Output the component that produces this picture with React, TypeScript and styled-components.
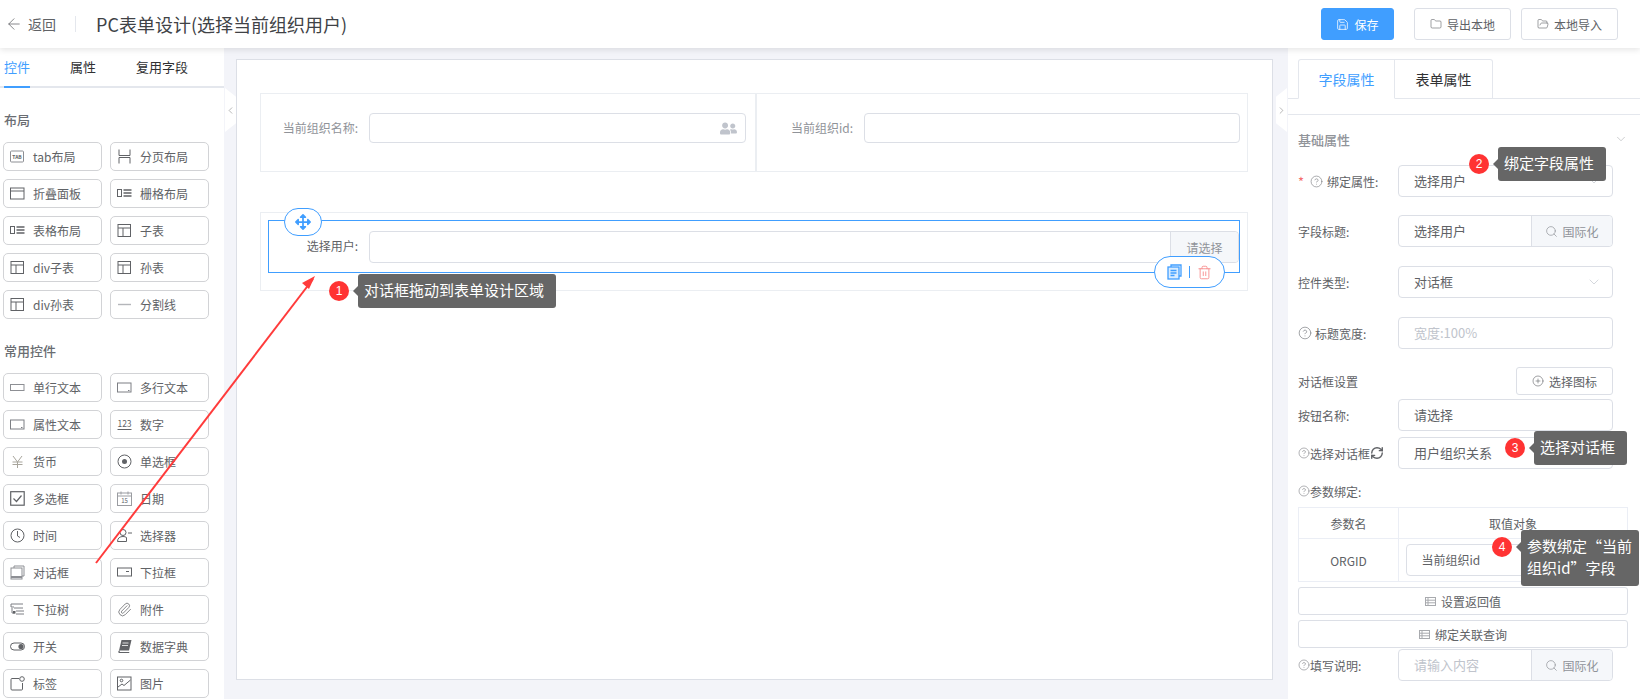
import React from 'react';
import styled, { createGlobalStyle } from 'styled-components';
import {
  ArrowLeft,
  ChevronDown,
  ChevronLeft,
  ChevronRight,
  CircleHelp,
  CirclePlus,
  Folder,
  FolderOpen,
  Paperclip,
  RefreshCw,
  Save,
  Search,
  Trash2,
} from 'lucide-react';
import { FaArrowsAlt, FaUserFriends } from 'react-icons/fa';

const GlobalStyle = createGlobalStyle`
  html, body {
    margin: 0;
    padding: 0;
    background: #fff;
    font-family: "Noto Sans CJK SC", "Noto Sans", sans-serif;
  }
  * {
    box-sizing: border-box;
  }
`;

const Page = styled.div`
  position: relative;
  width: 1640px;
  height: 699px;
  overflow: hidden;
  display: flex;
  flex-direction: column;
  background: #f3f4f9;
`;

const Header = styled.header`
  height: 48px;
  flex: none;
  display: flex;
  align-items: center;
  padding: 0 22px 0 5px;
  background: #fff;
  box-shadow: 0 2px 6px rgba(0, 0, 0, 0.1);
  position: relative;
  z-index: 2;
`;

const BackLink = styled.div`
  display: flex;
  align-items: center;
  gap: 5px;
  color: #606266;
  font-size: 14px;
  width: 70px;
`;

const HeaderDivider = styled.div`
  width: 1px;
  height: 16px;
  background: #e4e7ed;
  margin-right: 20px;
`;

const Title = styled.div`
  flex: 1;
  font-size: 18px;
  color: #404246;
`;

const HeaderButton = styled.button<{ $primary?: boolean; $w: number; $ml: number }>`
  width: ${(p) => p.$w}px;
  height: 32px;
  margin-left: ${(p) => p.$ml}px;
  display: flex;
  align-items: center;
  justify-content: center;
  gap: 5px;
  padding: 0;
  border-radius: 3px;
  font-family: inherit;
  font-size: 12px;
  color: ${(p) => (p.$primary ? '#fff' : '#606266')};
  background: ${(p) => (p.$primary ? '#409eff' : '#fff')};
  border: 1px solid ${(p) => (p.$primary ? '#409eff' : '#dcdfe6')};
`;

const Body = styled.div`
  flex: 1;
  min-height: 0;
  display: flex;
`;

const LeftPanel = styled.aside`
  width: 224px;
  flex: none;
  background: #fff;
  overflow: hidden;
`;

const LeftTabs = styled.div`
  height: 40px;
  display: flex;
  gap: 40px;
  padding-left: 4px;
  border-bottom: 2px solid #e4e7ed;
`;

const LeftTab = styled.div<{ $active?: boolean }>`
  height: 40px;
  line-height: 38px;
  font-size: 13px;
  color: ${(p) => (p.$active ? '#409eff' : '#303133')};
  border-bottom: 2px solid ${(p) => (p.$active ? '#409eff' : 'transparent')};
`;

const Palette = styled.div`
  padding: 22px 0 0 3px;
`;

const PaletteTitle = styled.div<{ $mt?: number }>`
  height: 20px;
  line-height: 20px;
  margin: ${(p) => p.$mt ?? 0}px 0 12px 1px;
  font-size: 13px;
  font-weight: 500;
  color: #6a6d72;
`;

const PaletteGrid = styled.div`
  display: grid;
  grid-template-columns: 99px 99px;
  grid-auto-rows: 29px;
  column-gap: 8px;
  row-gap: 8px;
`;

const PaletteItem = styled.div`
  display: flex;
  align-items: center;
  gap: 8px;
  padding-left: 6px;
  border: 1px solid #d2d3d6;
  border-radius: 5px;
  background: #fff;
  font-size: 12px;
  color: #606266;
  white-space: nowrap;
`;

const IconBox = styled.span`
  width: 15px;
  height: 15px;
  flex: none;
  display: flex;
  align-items: center;
  justify-content: center;
  color: #606266;
`;

const Center = styled.main`
  flex: 1;
  min-width: 0;
  padding: 11px 15px 19px 12px;
`;

const Canvas = styled.div`
  height: 100%;
  padding: 33px 24px 0 23px;
  background: #fff;
  border: 1px solid #dcdfe6;
  display: flex;
  flex-direction: column;
  gap: 40px;
`;

const FormRow = styled.div`
  height: 79px;
  display: flex;
  border: 1px solid #ebeef2;
`;

const FormCell = styled.div<{ $w: number; $pad: number }>`
  flex: ${(p) => (p.$w ? `0 0 ${p.$w}px` : '1')};
  display: flex;
  align-items: flex-start;
  padding: 19px ${(p) => p.$pad}px 0 0;
  & + & {
    border-left: 2px solid #ebeef2;
  }
`;

const CellLabel = styled.div<{ $w: number; $light?: boolean }>`
  width: ${(p) => p.$w}px;
  height: 30px;
  line-height: 29px;
  text-align: right;
  padding-right: 11px;
  flex: none;
  font-size: 12px;
  color: ${(p) => (p.$light ? '#909399' : '#606266')};
`;

const CellInput = styled.div`
  flex: 1;
  height: 30px;
  display: flex;
  align-items: center;
  justify-content: flex-end;
  padding-right: 8px;
  border: 1px solid #dcdfe6;
  border-radius: 4px;
  color: #c0c4cc;
`;

const DropRow = styled.div`
  height: 79px;
  padding: 7px;
  border: 1px solid #ebeef2;
`;

const Selected = styled.div`
  position: relative;
  height: 53px;
  display: flex;
  padding: 10px 0 0 0;
  border: 1px solid #409eff;
`;

const SelectInput = styled.div`
  flex: 1;
  height: 32px;
  display: flex;
  justify-content: flex-end;
  border: 1px solid #dcdfe6;
  border-radius: 4px;
`;

const SelectAddon = styled.div`
  width: 68px;
  display: flex;
  align-items: center;
  justify-content: center;
  background: #f5f7fa;
  border-left: 1px solid #dcdfe6;
  border-radius: 0 4px 4px 0;
  font-size: 12px;
  color: #909399;
`;

const MoveHandle = styled.div`
  position: absolute;
  left: 15px;
  top: -13px;
  width: 38px;
  height: 28px;
  display: flex;
  align-items: center;
  justify-content: center;
  background: #fff;
  border: 1px solid #409eff;
  border-radius: 14px;
  color: #409eff;
`;

const ActionPill = styled.div`
  position: absolute;
  right: 14px;
  top: 35px;
  width: 71px;
  height: 32px;
  display: flex;
  align-items: center;
  justify-content: center;
  gap: 7px;
  background: #fff;
  border: 1px solid #409eff;
  border-radius: 16px;
`;

const PillDivider = styled.span`
  width: 1px;
  height: 12px;
  background: #409eff;
`;

const Handle = styled.div<{ $side: 'left' | 'right' }>`
  position: absolute;
  top: 88px;
  ${(p) => (p.$side === 'left' ? 'left: 225px;' : 'left: 1276px;')}
  width: 11px;
  height: 44px;
  display: flex;
  align-items: center;
  justify-content: center;
  background: #fff;
  color: #666;
  clip-path: ${(p) =>
    p.$side === 'left'
      ? 'polygon(0 0, 100% 20%, 100% 80%, 0 100%)'
      : 'polygon(0 20%, 100% 0, 100% 100%, 0 80%)'};
`;

const RightPanel = styled.aside`
  width: 352px;
  flex: none;
  background: #fff;
  overflow: hidden;
`;

const RightTabs = styled.div`
  margin-top: 11px;
  height: 40px;
  display: flex;
  padding-left: 10px;
  border-bottom: 1px solid #e4e7ed;
`;

const RightTab = styled.div<{ $active?: boolean }>`
  width: ${(p) => (p.$active ? 97 : 98)}px;
  height: 40px;
  line-height: 38px;
  text-align: center;
  font-size: 14px;
  color: ${(p) => (p.$active ? '#409eff' : '#303133')};
  background: #fff;
  border: 1px solid #e4e7ed;
  border-bottom-color: ${(p) => (p.$active ? '#fff' : '#e4e7ed')};
  border-left-width: ${(p) => (p.$active ? 1 : 0)}px;
  border-radius: ${(p) => (p.$active ? '3px 0 0 0' : '0 3px 0 0')};
`;

const PropBody = styled.div`
  margin-top: 15px;
  padding: 0 12px 0 10px;
  border-top: 1px solid #e4e7ed;
`;

const SectionHead = styled.div`
  height: 50px;
  padding-bottom: 2px;
  display: flex;
  align-items: center;
  justify-content: space-between;
  font-size: 13px;
  font-weight: 500;
  color: #909399;
`;

const PropRow = styled.div<{ $mb: number }>`
  display: flex;
  align-items: center;
  margin-bottom: ${(p) => p.$mb}px;
`;

const PropLabel = styled.div<{ $gap?: number }>`
  width: 100px;
  flex: none;
  display: flex;
  align-items: center;
  gap: ${(p) => p.$gap ?? 0}px;
  font-size: 12px;
  color: #606266;
  white-space: nowrap;
`;

const Star = styled.span`
  color: #f56c6c;
  margin-right: 2px;
  font-size: 13px;
`;

const Field = styled.div`
  width: 215px;
  height: 32px;
  display: flex;
  align-items: center;
  border: 1px solid #dcdfe6;
  border-radius: 4px;
  background: #fff;
  font-size: 13px;
  color: #606266;
`;

const FieldText = styled.div<{ $placeholder?: boolean }>`
  flex: 1;
  padding: 0 0 2px 15px;
  color: ${(p) => (p.$placeholder ? '#c0c4cc' : '#606266')};
`;

const FieldAddon = styled.div`
  width: 81px;
  height: 100%;
  display: flex;
  align-items: center;
  justify-content: center;
  gap: 4px;
  background: #f5f7fa;
  border-left: 1px solid #dcdfe6;
  border-radius: 0 4px 4px 0;
  font-size: 12px;
  color: #909399;
`;

const FieldChevron = styled.span`
  display: flex;
  margin-right: 10px;
  color: #c0c4cc;
`;

const SubHead = styled.div`
  display: flex;
  align-items: center;
  justify-content: space-between;
  margin-bottom: 4px;
  padding-right: 15px;
  font-size: 12px;
  color: #606266;
`;

const IconButton = styled.button`
  width: 97px;
  height: 28px;
  display: flex;
  align-items: center;
  justify-content: center;
  gap: 5px;
  padding: 0;
  background: #fff;
  border: 1px solid #dcdfe6;
  border-radius: 3px;
  font-family: inherit;
  font-size: 12px;
  color: #606266;
`;

const BindLabel = styled.div`
  height: 20px;
  margin: 12px 0 6px;
  display: flex;
  align-items: center;
  gap: 0;
  font-size: 12px;
  color: #606266;
`;

const BindTable = styled.div`
  display: grid;
  grid-template-columns: 100px 1fr;
  grid-template-rows: 31px 42px;
  border: 1px solid #ebeef5;
  margin-bottom: 5px;
  font-size: 12px;
  color: #606266;
`;

const BindCell = styled.div<{ $left?: boolean; $top?: boolean }>`
  display: flex;
  align-items: center;
  justify-content: center;
  border-right: ${(p) => (p.$left ? '1px solid #ebeef5' : 'none')};
  border-bottom: ${(p) => (p.$top ? '1px solid #ebeef5' : 'none')};
`;

const BindSelect = styled(Field)`
  width: 215px;
  font-size: 12px;
`;

const WideButton = styled.button<{ $mb: number }>`
  width: 100%;
  height: 28px;
  margin-bottom: ${(p) => p.$mb}px;
  display: flex;
  align-items: center;
  justify-content: center;
  gap: 5px;
  padding: 0;
  background: #fff;
  border: 1px solid #dcdfe6;
  border-radius: 3px;
  font-family: inherit;
  font-size: 12px;
  color: #606266;
`;

const Callout = styled.div<{ $x: number; $y: number }>`
  position: absolute;
  left: ${(p) => p.$x}px;
  top: ${(p) => p.$y}px;
  display: flex;
  align-items: flex-start;
  z-index: 5;
`;

const Badge = styled.div<{ $mt: number }>`
  width: 20px;
  height: 20px;
  margin-top: ${(p) => p.$mt}px;
  margin-right: 9px;
  display: flex;
  align-items: center;
  justify-content: center;
  border-radius: 50%;
  background: #ff3333;
  color: #fff;
  font-family: "Liberation Sans", sans-serif;
  font-size: 12px;
`;

const Tip = styled.div<{ $w: number }>`
  position: relative;
  width: ${(p) => p.$w}px;
  padding: 5px 6px 7px;
  background: #666;
  border-radius: 3px;
  color: #fff;
  font-size: 15px;
  line-height: 22px;

  &::before {
    content: '';
    position: absolute;
    left: -5px;
    top: 12px;
    border-style: solid;
    border-width: 5px 5px 5px 0;
    border-color: transparent #666 transparent transparent;
  }
`;

const ArrowLayer = styled.svg`
  position: absolute;
  inset: 0;
  z-index: 4;
  pointer-events: none;
`;

const Line = (props: React.SVGProps<SVGSVGElement>) => (
  <svg
    width="15"
    height="15"
    viewBox="0 0 15 15"
    fill="none"
    stroke="currentColor"
    strokeWidth="1"
    {...props}
  />
);

const TableIcon = () => (
  <Line>
    <rect x="1" y="1.5" width="12.5" height="12" />
    <path d="M1 5h12.5M6 5v8.5" />
  </Line>
);

const ListIcon = () => (
  <Line>
    <rect x="0.5" y="3.5" width="4" height="7" />
    <path d="M6.5 4h8M6.5 7h8M6.5 10h8" strokeWidth="1.4" />
  </Line>
);

const icons: Record<string, React.ReactNode> = {
  tab: (
    <Line stroke="#8d8f94">
      <rect x="0.5" y="2" width="13" height="11" rx="1" />
      <text x="7" y="9.500" fontSize="5" fontWeight="700" textAnchor="middle" fill="#606266" stroke="none">
        TAB
      </text>
    </Line>
  ),
  page: (
    <Line>
      <path d="M2 0.500v6h11v-6M2 14.500v-6h11v6" />
    </Line>
  ),
  fold: (
    <Line>
      <rect x="0.5" y="2" width="13.5" height="11" />
      <path d="M0.5 5h13.5" />
    </Line>
  ),
  list: <ListIcon />,
  table: <TableIcon />,
  divider: (
    <Line>
      <path d="M1 7.5h13" stroke="#b4b6ba" strokeWidth="1.4" />
    </Line>
  ),
  single: (
    <Line stroke="#8d8f94">
      <rect x="0.5" y="4.5" width="13.5" height="6" />
    </Line>
  ),
  multi: (
    <Line stroke="#7d7f84">
      <rect x="0.5" y="3" width="13.5" height="9" />
      <path d="M11 10.5h1.5" />
    </Line>
  ),
  number: (
    <Line>
      <text x="7.5" y="10" fontSize="8.5" textAnchor="middle" fill="currentColor" stroke="none">
        123
      </text>
      <path d="M0.5 12.5h14" />
    </Line>
  ),
  currency: (
    <Line stroke="#a8a59c">
      <path d="M3 2l4.5 6 4.500-6M2.500 8h10M2.500 10.500h10M7.500 8v6" />
    </Line>
  ),
  radio: (
    <Line>
      <circle cx="7.500" cy="7.500" r="6.500" />
      <circle cx="7.500" cy="7.500" r="2.500" fill="currentColor" stroke="none" />
    </Line>
  ),
  check: (
    <Line strokeWidth="1.200">
      <rect x="0.700" y="0.700" width="13.500" height="13.500" />
      <path d="M3.500 7.500l3 3 5-6" />
    </Line>
  ),
  date: (
    <Line stroke="#9a9ca1">
      <rect x="0.500" y="2" width="14" height="12.500" />
      <path d="M0.500 5h14M4 0.500v3M11 0.500v3" />
      <text x="7.500" y="12" fontSize="6" textAnchor="middle" fill="currentColor" stroke="none">
        15
      </text>
    </Line>
  ),
  time: (
    <Line>
      <circle cx="7.500" cy="7.500" r="6.500" />
      <path d="M7.500 3v5l2.500 1.500" />
    </Line>
  ),
  picker: (
    <Line>
      <circle cx="6" cy="4.500" r="3" />
      <path d="M0.500 13.500c0-3.500 2.500-5 5.500-5 1.500 0 2.500 0.300 3.500 1v4zM11 5h4" />
    </Line>
  ),
  dialog: (
    <Line stroke="#8d8f94">
      <path d="M4 3V1h10v10h-2" />
      <rect x="1" y="3" width="11" height="11" />
      <path d="M1 12h11" strokeWidth="2" />
    </Line>
  ),
  dropdown: (
    <Line>
      <rect x="0.500" y="3" width="14" height="8" />
      <path d="M9 6.500h3" />
    </Line>
  ),
  tree: (
    <Line stroke="#7d7f84">
      <path d="M1 2h12M1 2v3h3M4 6h9M2 6v5h3M6 9h8M6 12h8" />
      <rect x="3" y="9" width="2.500" height="2.500" fill="currentColor" stroke="none" />
    </Line>
  ),
  attach: <Paperclip size={15} strokeWidth={1.2} />,
  toggle: (
    <Line>
      <rect x="0.500" y="4" width="14" height="7" rx="3.500" />
      <circle cx="11" cy="7.500" r="2.600" fill="currentColor" stroke="none" />
    </Line>
  ),
  dict: (
    <Line stroke="none">
      <path d="M4.500 1h10l-2.500 10.500H2z" fill="currentColor" />
      <path d="M2 11.500c-1 1-1 2 0 2.500h10l0.500-1H3c-0.500 0-0.500-1 0-1.500z" fill="currentColor" />
      <path d="M5.500 4h6M5 6.500h6" stroke="#fff" strokeWidth="0.800" />
    </Line>
  ),
  tag: (
    <Line>
      <path d="M9 2.500H2a1 1 0 0 0-1 1v9.500a1 1 0 0 0 1 1h9.500a1 1 0 0 0 1-1V7" />
      <circle cx="12" cy="3" r="2.300" />
    </Line>
  ),
  image: (
    <Line>
      <rect x="0.500" y="1" width="13.500" height="13" />
      <circle cx="4.500" cy="4.500" r="1.300" />
      <path d="M1 11l4-3 2 1.500L13.500 4" />
    </Line>
  ),
};

const layoutItems = [
  ['tab布局', 'tab'],
  ['分页布局', 'page'],
  ['折叠面板', 'fold'],
  ['栅格布局', 'list'],
  ['表格布局', 'list'],
  ['子表', 'table'],
  ['div子表', 'table'],
  ['孙表', 'table'],
  ['div孙表', 'table'],
  ['分割线', 'divider'],
];

const commonItems = [
  ['单行文本', 'single'],
  ['多行文本', 'multi'],
  ['属性文本', 'multi'],
  ['数字', 'number'],
  ['货币', 'currency'],
  ['单选框', 'radio'],
  ['多选框', 'check'],
  ['日期', 'date'],
  ['时间', 'time'],
  ['选择器', 'picker'],
  ['对话框', 'dialog'],
  ['下拉框', 'dropdown'],
  ['下拉树', 'tree'],
  ['附件', 'attach'],
  ['开关', 'toggle'],
  ['数据字典', 'dict'],
  ['标签', 'tag'],
  ['图片', 'image'],
];

const PaletteList = ({ items }: { items: string[][] }) => (
  <PaletteGrid>
    {items.map(([label, icon]) => (
      <PaletteItem key={label}>
        <IconBox>{icons[icon]}</IconBox>
        {label}
      </PaletteItem>
    ))}
  </PaletteGrid>
);

const Help = ({ size = 13 }: { size?: number }) => (
  <CircleHelp size={size} strokeWidth={1.2} color="#7d7f84" />
);

const I18nAddon = () => (
  <FieldAddon>
    <Search size={13} strokeWidth={1.3} />
    国际化
  </FieldAddon>
);

const TableGlyph = () => (
  <svg width="11" height="9" viewBox="0 0 11 9" fill="none" stroke="#a8aaae">
    <rect x="0.5" y="0.5" width="10" height="8" />
    <path d="M0.5 3.200h10M0.500 5.800h10M3 0.500v8" />
  </svg>
);

const CopyGlyph = () => (
  <svg width="15" height="16" viewBox="0 0 15 16" fill="none" stroke="#409eff" strokeWidth="1.300">
    <path d="M4 3V1h10v11h-2" />
    <rect x="1" y="3" width="11" height="12" fill="#d9ecff" />
    <path d="M3.500 6.500h6M3.500 9h6M3.500 11.500h4" />
  </svg>
);

const App = () => (
  <Page>
    <GlobalStyle />
    <Header>
      <BackLink>
        <ArrowLeft size={18} strokeWidth={1} />
        返回
      </BackLink>
      <HeaderDivider />
      <Title>PC表单设计(选择当前组织用户)</Title>
      <HeaderButton $primary $w={73} $ml={0}>
        <Save size={13} strokeWidth={1.4} />
        保存
      </HeaderButton>
      <HeaderButton $w={97} $ml={20}>
        <Folder size={12} strokeWidth={1.2} />
        导出本地
      </HeaderButton>
      <HeaderButton $w={97} $ml={10}>
        <FolderOpen size={12} strokeWidth={1.2} />
        本地导入
      </HeaderButton>
    </Header>

    <Body>
      <LeftPanel>
        <LeftTabs>
          <LeftTab $active>控件</LeftTab>
          <LeftTab>属性</LeftTab>
          <LeftTab>复用字段</LeftTab>
        </LeftTabs>
        <Palette>
          <PaletteTitle>布局</PaletteTitle>
          <PaletteList items={layoutItems} />
          <PaletteTitle $mt={22}>常用控件</PaletteTitle>
          <PaletteList items={commonItems} />
        </Palette>
      </LeftPanel>

      <Center>
        <Canvas>
          <FormRow>
            <FormCell $w={494} $pad={9}>
              <CellLabel $w={108} $light>当前组织名称:</CellLabel>
              <CellInput>
                <FaUserFriends size={17} color="#c0c4cc" />
              </CellInput>
            </FormCell>
            <FormCell $w={0} $pad={7}>
              <CellLabel $w={107} $light>当前组织id:</CellLabel>
              <CellInput />
            </FormCell>
          </FormRow>
          <DropRow>
            <Selected>
              <MoveHandle>
                <FaArrowsAlt size={16} />
              </MoveHandle>
              <CellLabel $w={100}>选择用户:</CellLabel>
              <SelectInput>
                <SelectAddon>请选择</SelectAddon>
              </SelectInput>
              <ActionPill>
                <CopyGlyph />
                <PillDivider />
                <Trash2 size={15} strokeWidth={1.4} color="#f78989" />
              </ActionPill>
            </Selected>
          </DropRow>
        </Canvas>
      </Center>

      <RightPanel>
        <RightTabs>
          <RightTab $active>字段属性</RightTab>
          <RightTab>表单属性</RightTab>
        </RightTabs>
        <PropBody>
          <SectionHead>
            基础属性
            <ChevronDown size={14} strokeWidth={1} color="#a8aaae" />
          </SectionHead>
          <PropRow $mb={18}>
            <PropLabel $gap={4}>
              <Star>*</Star>
              <Help />
              绑定属性:
            </PropLabel>
            <Field>
              <FieldText>选择用户</FieldText>
              <FieldChevron>
                <ChevronDown size={16} strokeWidth={1} />
              </FieldChevron>
            </Field>
          </PropRow>
          <PropRow $mb={19}>
            <PropLabel>字段标题:</PropLabel>
            <Field>
              <FieldText>选择用户</FieldText>
              <I18nAddon />
            </Field>
          </PropRow>
          <PropRow $mb={19}>
            <PropLabel>控件类型:</PropLabel>
            <Field>
              <FieldText>对话框</FieldText>
              <FieldChevron>
                <ChevronDown size={16} strokeWidth={1} />
              </FieldChevron>
            </Field>
          </PropRow>
          <PropRow $mb={18}>
            <PropLabel $gap={3}>
              <Help size={14} />
              标题宽度:
            </PropLabel>
            <Field>
              <FieldText $placeholder>宽度:100%</FieldText>
            </Field>
          </PropRow>
          <SubHead>
            对话框设置
            <IconButton>
              <CirclePlus size={12} strokeWidth={1.2} />
              选择图标
            </IconButton>
          </SubHead>
          <PropRow $mb={6}>
            <PropLabel>按钮名称:</PropLabel>
            <Field>
              <FieldText>请选择</FieldText>
            </Field>
          </PropRow>
          <PropRow $mb={0}>
            <PropLabel>
              <Help size={12} />
              选择对话框
              <RefreshCw size={14} strokeWidth={2.4} />
            </PropLabel>
            <Field>
              <FieldText>用户组织关系</FieldText>
              <FieldChevron>
                <ChevronDown size={16} strokeWidth={1} />
              </FieldChevron>
            </Field>
          </PropRow>
          <BindLabel>
            <Help size={12} />
            参数绑定:
          </BindLabel>
          <BindTable>
            <BindCell $left $top>参数名</BindCell>
            <BindCell $top>取值对象</BindCell>
            <BindCell $left>ORGID</BindCell>
            <BindCell>
              <BindSelect>
                <FieldText>当前组织id</FieldText>
                <FieldChevron>
                  <ChevronDown size={16} strokeWidth={1} />
                </FieldChevron>
              </BindSelect>
            </BindCell>
          </BindTable>
          <WideButton $mb={5}>
            <TableGlyph />
            设置返回值
          </WideButton>
          <WideButton $mb={1}>
            <TableGlyph />
            绑定关联查询
          </WideButton>
          <PropRow $mb={0}>
            <PropLabel>
              <Help size={12} />
              填写说明:
            </PropLabel>
            <Field>
              <FieldText $placeholder>请输入内容</FieldText>
              <I18nAddon />
            </Field>
          </PropRow>
        </PropBody>
      </RightPanel>
    </Body>

    <Handle $side="left">
      <ChevronLeft size={13} strokeWidth={1} />
    </Handle>
    <Handle $side="right">
      <ChevronRight size={13} strokeWidth={1} />
    </Handle>

    <ArrowLayer width="1640" height="699" viewBox="0 0 1640 699">
      <path d="M96 563L313 279" stroke="#ff3b3b" strokeWidth="2" fill="none" />
      <path d="M315 276l-13 7 7 6z" fill="#ff3b3b" />
    </ArrowLayer>

    <Callout $x={329} $y={274}>
      <Badge $mt={7}>1</Badge>
      <Tip $w={198}>对话框拖动到表单设计区域</Tip>
    </Callout>
    <Callout $x={1469} $y={147}>
      <Badge $mt={7}>2</Badge>
      <Tip $w={108}>绑定字段属性</Tip>
    </Callout>
    <Callout $x={1505} $y={431}>
      <Badge $mt={7}>3</Badge>
      <Tip $w={93}>选择对话框</Tip>
    </Callout>
    <Callout $x={1492} $y={530}>
      <Badge $mt={7}>4</Badge>
      <Tip $w={118}>参数绑定“当前组织id”字段</Tip>
    </Callout>
  </Page>
);

export default App;
